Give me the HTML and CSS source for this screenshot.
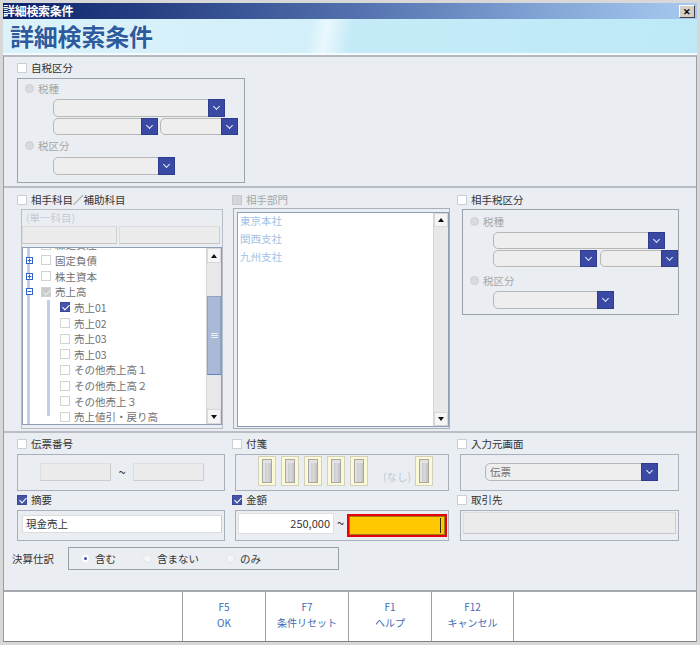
FILE: index.html
```html
<!DOCTYPE html>
<html lang="ja">
<head>
<meta charset="utf-8">
<title>詳細検索条件</title>
<link rel="stylesheet" href="styles.css">
</head>
<body>
<div class="window">
  <div class="titlebar"><span class="title">詳細検索条件</span><span class="close">✕</span></div>
  <div class="header"><h1>詳細検索条件</h1></div>
  <div class="content">
    <section class="sec sec-a">
      <div class="chk"><span class="cb"></span><span>自税区分</span></div>
      <div class="taxgroup tg-a">
        <div class="rrow"><span class="rd"></span><span class="dim">税種</span></div>
        <div class="crow c1"><div class="combo w172 h18"><i class="dd"></i></div></div>
        <div class="crow c2"><div class="combo w105 h17"><i class="dd"></i></div><div class="combo w78 h17"><i class="dd"></i></div></div>
        <div class="rrow r2"><span class="rd"></span><span class="dim">税区分</span></div>
        <div class="crow c4"><div class="combo w122 h18"><i class="dd"></i></div></div>
      </div>
    </section>

    <section class="sec sec-b">
      <div class="col col1">
        <div class="chk"><span class="cb"></span><span>相手科目／補助科目</span></div>
        <div class="kbox">
          <div class="single">(単一科目)</div>
          <div class="kbtns"><div class="kbtn kb1"></div><div class="kbtn kb2"></div></div>
          <div class="tree">
            <div class="tree-body">
              <div class="trow l1 first"><span class="exp"></span><span class="cb t"></span><span>繰延資産</span></div>
              <div class="trow l1"><svg class="exp" viewBox="0 0 7 7"><rect x="0.5" y="0.5" width="6" height="6" fill="#fff" stroke="#2f63c9"/><path d="M1.5 3.5h4M3.5 1.5v4" stroke="#2f63c9"/></svg><span class="cb t"></span><span>固定負債</span></div>
              <div class="trow l1"><svg class="exp" viewBox="0 0 7 7"><rect x="0.5" y="0.5" width="6" height="6" fill="#fff" stroke="#2f63c9"/><path d="M1.5 3.5h4M3.5 1.5v4" stroke="#2f63c9"/></svg><span class="cb t"></span><span>株主資本</span></div>
              <div class="trow l1"><svg class="exp" viewBox="0 0 7 7"><rect x="0.5" y="0.5" width="6" height="6" fill="#fff" stroke="#2f63c9"/><path d="M1.5 3.5h4" stroke="#2f63c9"/></svg><span class="cb t part"></span><span>売上高</span></div>
              <div class="kids">
                <div class="trow l2"><span class="cb t on"></span><span>売上01</span></div>
                <div class="trow l2"><span class="cb t"></span><span>売上02</span></div>
                <div class="trow l2"><span class="cb t"></span><span>売上03</span></div>
                <div class="trow l2"><span class="cb t"></span><span>売上03</span></div>
                <div class="trow l2"><span class="cb t"></span><span>その他売上高１</span></div>
                <div class="trow l2"><span class="cb t"></span><span>その他売上高２</span></div>
                <div class="trow l2"><span class="cb t"></span><span>その他売上３</span></div>
                <div class="trow l2"><span class="cb t"></span><span>売上値引・戻り高</span></div>
              </div>
            </div>
            <div class="sb">
              <div class="sb-btn up"></div>
              <div class="sb-track"><div class="thumb"></div></div>
              <div class="sb-btn down"></div>
            </div>
          </div>
        </div>
      </div>

      <div class="col col2">
        <div class="chk"><span class="cb dis"></span><span class="dim">相手部門</span></div>
        <div class="bbox">
          <div class="list">
            <div class="list-body">
              <div class="li">東京本社</div>
              <div class="li">関西支社</div>
              <div class="li">九州支社</div>
            </div>
            <div class="sb sb2">
              <div class="sb-btn up"></div>
              <div class="sb-track"></div>
              <div class="sb-btn down"></div>
            </div>
          </div>
        </div>
      </div>

      <div class="col col3">
        <div class="chk"><span class="cb"></span><span>相手税区分</span></div>
        <div class="taxgroup tg-b">
          <div class="rrow"><span class="rd"></span><span class="dim">税種</span></div>
          <div class="crow c1"><div class="combo w172 h17"><i class="dd"></i></div></div>
          <div class="crow c2"><div class="combo w104 h17"><i class="dd"></i></div><div class="combo w78 h17"><i class="dd"></i></div></div>
          <div class="rrow r2"><span class="rd"></span><span class="dim">税区分</span></div>
          <div class="crow c4"><div class="combo w121 h18"><i class="dd"></i></div></div>
        </div>
      </div>
    </section>

    <section class="sec sec-c">
      <div class="crow3">
        <div class="col col1">
          <div class="chk"><span class="cb"></span><span>伝票番号</span></div>
          <div class="fbox denpyo">
            <div class="tin w71"></div><span class="tilde">~</span><div class="tin w71"></div>
          </div>
          <div class="chk chk2"><span class="cb on"></span><span>摘要</span></div>
          <div class="fbox tekiyo">
            <div class="win">現金売上</div>
          </div>
        </div>
        <div class="col col2">
          <div class="chk"><span class="cb"></span><span>付箋</span></div>
          <div class="fbox fusenbox">
            <span class="fusen"><i></i></span>
            <span class="fusen"><i></i></span>
            <span class="fusen"><i></i></span>
            <span class="fusen"><i></i></span>
            <span class="fusen"><i></i></span>
            <span class="nashi">(なし)</span>
            <span class="fusen"><i></i></span>
          </div>
          <div class="chk chk2"><span class="cb on"></span><span>金額</span></div>
          <div class="fbox kingaku">
            <div class="amt">250,000</div><span class="tilde2">~</span><div class="amt2"></div>
          </div>
        </div>
        <div class="col col3">
          <div class="chk"><span class="cb"></span><span>入力元画面</span></div>
          <div class="fbox nyuryoku">
            <div class="combo w173 h18 txt"><span class="ctext">伝票</span><i class="dd"></i></div>
          </div>
          <div class="chk chk2"><span class="cb"></span><span>取引先</span></div>
          <div class="fbox torihiki">
            <div class="gin"></div>
          </div>
        </div>
      </div>
      <div class="kessan">
        <span class="klabel">決算仕訳</span>
        <div class="kopts">
          <span class="opt"><span class="rd2 sel"></span>含む</span>
          <span class="opt"><span class="rd2"></span>含まない</span>
          <span class="opt"><span class="rd2"></span>のみ</span>
        </div>
      </div>
    </section>
  </div>
  <div class="footer">
    <div class="fbtn">F5<br>OK</div>
    <div class="fbtn">F7<br>条件リセット</div>
    <div class="fbtn">F1<br>ヘルプ</div>
    <div class="fbtn last">F12<br>キャンセル</div>
  </div>
</div>
</body>
</html>
```

FILE: styles.css
```css
* { box-sizing: border-box; margin: 0; padding: 0; }
html, body { width: 700px; height: 645px; overflow: hidden; }
body {
  background: #d6d6d6;
  font-family: "Noto Sans CJK JP", "Noto Sans", sans-serif;
  font-size: 10.5px;
  color: #333;
}
.window {
  width: 700px;
  height: 645px;
  padding: 3px;
  background: #d8d8d8;
}
.titlebar {
  height: 16px;
  background: linear-gradient(to right, #0c2168 0%, #2c4688 25%, #5a78b4 55%, #86a8d8 80%, #a8caf0 100%);
  display: flex;
  align-items: center;
  justify-content: space-between;
  padding-right: 2px;
}
.title { color: #fff; font-weight: bold; font-size: 12px; line-height: 16px; letter-spacing: -0.3px; }
.close {
  width: 16px; height: 13px;
  background: #d4d0c8;
  border: 1px solid; border-color: #fff #404040 #404040 #fff;
  font-size: 9px; font-weight: bold; color: #000;
  display: flex; align-items: center; justify-content: center;
  line-height: 1;
}
.header {
  height: 36px;
  border-bottom: 2px solid #f4fbfe;
  background: linear-gradient(100deg, #dbf2fb 0%, #d3eff9 44%, #eaf8fd 46.5%, #c6ebf8 50%, #bde9f7 100%);
  padding-left: 7px;
}
.header h1 {
  font-size: 24px;
  font-weight: bold;
  line-height: 34px;
  color: #2d5c9e;
  letter-spacing: -0.2px;
  text-shadow: 0 0 2px #fff;
}
.content {
  border-left: 1px solid #969da6;
  border-right: 1px solid #969da6;
  border-top: 2px solid #b5bac1;
  background: #eaeef3;
}
.sec { border-bottom: 2px solid #b9bec6; padding-left: 13px; }
.sec-a { height: 131px; padding-top: 5px; }
.sec-b { height: 245px; padding-top: 6px; display: flex; }
.sec-c { height: 157px; padding-top: 5px; border-bottom: 0; }

.chk { display: flex; align-items: center; gap: 4px; height: 12px; line-height: 12px; white-space: nowrap; color: #333; }
.cb { width: 10px; height: 10px; background: #fff; border: 1px solid #cbd0d8; flex: none; position: relative; }
.cb.on { background: #4553a8; border-color: #3a4898; }
.cb.on::after {
  content: ""; position: absolute; left: 2.5px; top: 0px;
  width: 3px; height: 6px;
  border: solid #fff; border-width: 0 1.5px 1.5px 0;
  transform: rotate(45deg);
}
.cb.dis { background: #d3d6da; border-color: #c6cad0; }
.cb.part { background: #cacaca; border-color: #bcbcbc; }
.cb.part::after {
  content: ""; position: absolute; left: 2.5px; top: 0px;
  width: 3px; height: 6px;
  border: solid #ececec; border-width: 0 1.5px 1.5px 0;
  transform: rotate(45deg);
}
.dim { color: #a6a6a6; }

.taxgroup { border: 1px solid #9ba3ad; margin-top: 4px; }
.tg-a { width: 228px; height: 105px; padding: 4px 0 0 7px; }
.tg-b { width: 217px; height: 106px; padding: 6px 0 0 7px; margin: 3px 0 0 5px; }
.rrow { display: flex; align-items: center; gap: 4px; height: 11px; white-space: nowrap; }
.rd { width: 9px; height: 9px; border-radius: 50%; background: #d9dadc; border: 1px solid #ced0d4; flex: none; }
.crow { display: flex; gap: 2px; }
.tg-a .crow { padding-left: 28px; }
.tg-a .c1 { margin-top: 5px; }
.tg-a .c2 { margin-top: 1px; }
.tg-a .r2 { margin-top: 5px; }
.tg-a .c4 { margin-top: 6px; }
.tg-b .crow { padding-left: 23px; }
.tg-b .c1 { margin-top: 5px; }
.tg-b .c2 { margin-top: 1px; gap: 3px; }
.tg-b .r2 { margin-top: 8px; }
.tg-b .c4 { margin-top: 5px; }

.combo {
  display: flex; justify-content: flex-end; align-items: stretch;
  background: #eeeeee;
  border: 1px solid #b7b7b7;
  border-radius: 5px 0 0 5px;
  flex: none;
}
.combo.txt { justify-content: space-between; }
.ctext { color: #707070; padding-left: 4px; line-height: 16px; }
.h18 { height: 18px; }
.h17 { height: 17px; }
.w172 { width: 172px; }
.w173 { width: 173px; }
.w105 { width: 105px; }
.w104 { width: 104px; }
.w78 { width: 78px; }
.w122 { width: 122px; }
.w121 { width: 121px; }
.w71 { width: 71px; }
.dd {
  display: block; position: relative;
  width: 17px;
  margin: -1px -1px -1px 0;
  background: #3a49a4;
  border: 1px solid #2e3c8e;
}
.dd::after {
  content: ""; position: absolute;
  left: 5px; top: calc(50% - 4px);
  width: 4px; height: 4px;
  border: solid #e8ecff; border-width: 0 1px 1px 0;
  transform: rotate(45deg);
}

/* section B */
.col1 { width: 215px; flex: none; }
.col2 { width: 225px; flex: none; }
.col3 { width: 239px; flex: none; }

.kbox { margin: 3px 0 0 4px; width: 202px; height: 220px; border: 1px solid #b7bec8; }
.single { height: 16px; line-height: 16px; padding-left: 4px; color: #c3cad6; }
.kbtns { display: flex; gap: 2px; height: 18px; }
.kbtn { background: #ececec; border: 1px solid #dcdcdc; border-bottom-color: #c6c6c6; border-right-color: #cfcfcf; }
.kb1 { width: 95px; }
.kb2 { width: 101px; }
.tree { margin-top: 3px; width: 200px; height: 178px; border: 1px solid #8d9db4; display: flex; background: #fff; }
.tree-body {
  flex: 1; overflow: hidden;
  background: #fff linear-gradient(#bdd0e8, #bdd0e8) no-repeat 4px 0 / 3px 100%;
}
.trow { height: 15.65px; display: flex; align-items: center; color: #707070; white-space: nowrap; }
.trow.first { margin-top: -11px; }
.l1 { padding-left: 3px; }
.exp { width: 7px; height: 7px; flex: none; margin-right: 8px; display: block; }
.cb.t { border-color: #d2d2d2; margin-right: 4px; }
.cb.t.on { border-color: #3a4898; }
.kids { background: linear-gradient(#bdd0e8, #bdd0e8) no-repeat 24px 0 / 3px 116px; }
.l2 { padding-left: 37px; }

.sb { width: 15px; background: #e8e8e8; display: flex; flex-direction: column; border-left: 1px solid #d6d6d6; flex: none; }
.sb-btn { height: 15px; background: #f5f5f5; border: 1px solid #d8d8d8; position: relative; flex: none; }
.sb-btn::after {
  content: ""; position: absolute; left: 50%; top: 50%;
  width: 0; height: 0;
  border-left: 3.5px solid transparent; border-right: 3.5px solid transparent;
  transform: translate(-50%, -50%);
}
.sb-btn.up::after { border-bottom: 4px solid #111; }
.sb-btn.down::after { border-top: 4px solid #111; }
.sb-track { flex: 1; }
.thumb {
  margin-top: 33px; height: 79px;
  background: #aabad6;
  border: 1px solid #8ea3c8; border-bottom-color: #5f80bb;
  position: relative;
}
.thumb::after {
  content: ""; position: absolute; left: 3px; top: 36px;
  width: 7px; height: 5px;
  background: repeating-linear-gradient(#eef2f8 0 1px, transparent 1px 2px);
}

.bbox { margin: 2px 0 0 1px; width: 217px; height: 221px; border: 1px solid #a8b0bb; padding: 3px 0 0 3px; }
.list { display: flex; border: 1px solid #8d9db4; background: #fff; width: 212px; height: 215px; }
.list-body { flex: 1; }
.li { color: #a2bfe4; line-height: 16px; height: 18px; padding-left: 2px; }
.sb2 .sb-btn { height: 14px; }

/* section C */
.crow3 { display: flex; }
.chk2 { margin-top: 3px; }
.fbox { border: 1px solid #a8b0bb; margin-top: 4px; }
.col1 .fbox { width: 208px; }
.col2 .fbox { width: 214px; margin-left: 3px; }
.col3 .fbox { width: 219px; margin-left: 3px; }
.denpyo { height: 37px; padding: 8px 0 0 22px; display: flex; align-items: flex-start; }
.tin { height: 18px; background: #ebebeb; border: 1px solid #dedede; border-right-color: #cdcdcd; border-bottom-color: #cdcdcd; }
.tilde { width: 22px; text-align: center; line-height: 18px; color: #333; font-size: 13px; }
.tekiyo { height: 31px; padding: 4px 0 0 4px; }
.win { width: 200px; height: 18px; background: #fff; border: 1px solid #dcdcdc; border-right-color: #cfcfcf; padding-left: 3px; line-height: 16px; color: #333; }
.fusenbox { height: 37px; padding: 1px 0 0 22px; display: flex; gap: 5px; align-items: flex-start; }
.fusen { width: 18px; height: 30px; background: #fcfad4; border: 1px solid #d3d1bb; padding: 2px 3px; display: block; flex: none; }
.fusen i {
  display: block; height: 100%;
  background: linear-gradient(to right, #a9a9a9 0, #cfcfcf 30%, #d8d8d8 60%, #c2c2c2 100%);
  border: 1px solid #a6a6a6;
  box-shadow: inset 2px 3px 0 #e2e2e2;
}
.nashi { color: #bfc8d6; margin: 13px -1px 0 10px; white-space: nowrap; }
.kingaku { height: 31px; padding: 2px 0 0 2px; display: flex; align-items: flex-start; }
.amt { width: 96px; height: 21px; background: #fff; border: 1px solid #e0e0e0; text-align: right; padding-right: 3px; line-height: 19px; color: #333; font-size: 11px; }
.tilde2 { width: 13px; text-align: center; line-height: 20px; color: #333; font-size: 13px; }
.amt2 {
  width: 100px; height: 23px; margin-top: 1px;
  border: 2px solid #e8000c;
  background: #ffc800;
  box-shadow: inset 0 0 0 1px #9c7d10;
  position: relative;
}
.amt2::after { content: ""; position: absolute; right: 4px; top: 2px; width: 1px; height: 15px; background: #3a3000; }
.nyuryoku { height: 37px; padding: 8px 0 0 24px; }
.torihiki { height: 31px; padding: 1px 0 0 2px; }
.gin { width: 213px; height: 22px; background: #ebebeb; border: 1px solid #dedede; border-right-color: #cdcdcd; border-bottom-color: #c8c8c8; }

.kessan { display: flex; align-items: center; margin: 6px 0 0 -5px; }
.klabel { width: 56px; flex: none; color: #333; }
.kopts { width: 271px; height: 23px; border: 1px solid #98a0aa; display: flex; align-items: center; padding-left: 12px; gap: 27px; }
.opt { display: flex; align-items: center; gap: 5px; white-space: nowrap; color: #333; }
.rd2 { width: 9px; height: 9px; border-radius: 50%; background: #f4f5f7; border: 1px solid #e2e4e8; position: relative; flex: none; }
.rd2.sel { background: #fff; border-color: #eef0f4; }
.rd2.sel::after { content: ""; position: absolute; left: 2px; top: 2px; width: 3px; height: 3px; border-radius: 50%; background: #3c52b2; }

.footer {
  height: 52px;
  border-top: 2px solid #a4a9b0;
  border-bottom: 1px solid #7d8288;
  border-left: 1px solid #969da6;
  border-right: 1px solid #969da6;
  background: #fff;
  display: flex;
  padding-left: 178px;
}
.fbtn {
  width: 83px; height: 49px;
  border-left: 1px solid #a0a0a0;
  text-align: center;
  color: #3d6cb3;
  font-size: 10px;
  line-height: 16px;
  padding-top: 7px;
}
.fbtn.last { width: 83px; border-right: 1px solid #a0a0a0; }
```
